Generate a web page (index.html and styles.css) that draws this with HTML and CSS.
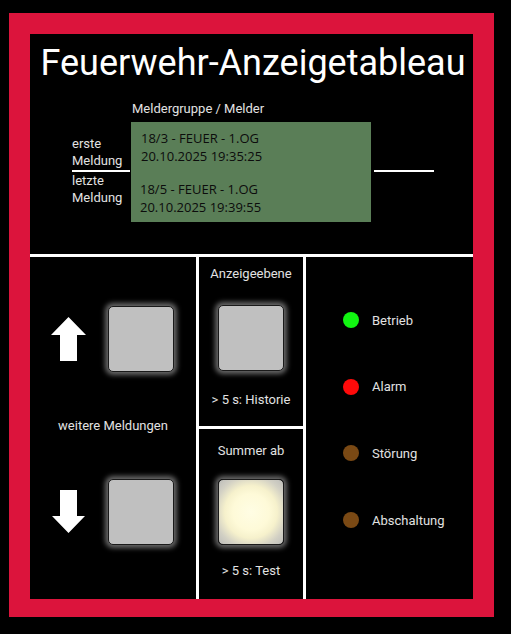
FILE: index.html
```html
<!DOCTYPE html>
<html lang="de">
<head>
<meta charset="utf-8">
<title>Feuerwehr-Anzeigetableau</title>
<link rel="stylesheet" href="styles.css">
</head>
<body>
<div class="frame">
  <div class="inner">
    <section class="top">
      <h1 class="title">Feuerwehr-Anzeigetableau</h1>
      <div class="display-caption">Meldergruppe / Melder</div>
      <div class="display-row">
        <div class="side-labels">
          <div class="label-first">erste<br>Meldung</div>
          <div class="label-last">letzte<br>Meldung</div>
        </div>
        <div class="display">
          <div class="msg">18/3 - FEUER - 1.OG<br>20.10.2025 19:35:25</div>
          <div class="msg msg-last">18/5 - FEUER - 1.OG<br>20.10.2025 19:39:55</div>
        </div>
        <div class="side-right"><div class="side-line"></div></div>
      </div>
    </section>
    <section class="bottom">
      <div class="col col-nav">
        <div class="nav-row">
          <svg class="arrow" width="35" height="44" viewBox="0 0 35 44"><polygon points="17.5,0 35,18 26,18 26,44 9,44 9,18 0,18" fill="#fff"/></svg>
          <div class="btn"></div>
        </div>
        <div class="nav-label">weitere Meldungen</div>
        <div class="nav-row">
          <svg class="arrow" width="35" height="44" viewBox="0 0 35 44"><polygon points="9,0 26,0 26,26 34,26 17.5,43 1,26 9,26" fill="#fff"/></svg>
          <div class="btn"></div>
        </div>
      </div>
      <div class="col col-mid">
        <div class="cell cell-level">
          <div class="cell-label">Anzeigeebene</div>
          <div class="btn"></div>
          <div class="cell-hint">&gt; 5 s: Historie</div>
        </div>
        <div class="cell cell-buzzer">
          <div class="cell-label">Summer ab</div>
          <div class="btn btn-lit"></div>
          <div class="cell-hint">&gt; 5 s: Test</div>
        </div>
      </div>
      <div class="col col-status">
        <div class="status"><span class="led led-green"></span><span>Betrieb</span></div>
        <div class="status"><span class="led led-red"></span><span>Alarm</span></div>
        <div class="status"><span class="led led-brown"></span><span>Störung</span></div>
        <div class="status"><span class="led led-brown"></span><span>Abschaltung</span></div>
      </div>
    </section>
  </div>
</div>
</body>
</html>
```
FILE: styles.css
```css
* { box-sizing: border-box; }
html, body { margin: 0; padding: 0; background: #000; }
body {
  font-family: Roboto, "Liberation Sans", sans-serif;
  color: #e2e2e2;
  width: 511px;
  height: 634px;
  overflow: hidden;
}
.frame {
  margin: 13px 0 0 9px;
  width: 485px;
  height: 604px;
  border: 21px solid #dc143c;
  border-bottom-width: 18px;
  background: #000;
}
.inner {
  height: 100%;
  display: flex;
  flex-direction: column;
}
.top {
  height: 223px;
  border-bottom: 3px solid #fff;
  padding-top: 9px;
}
.title {
  margin: 0;
  font-weight: 400;
  font-size: 36px;
  line-height: 40px;
  color: #fff;
  text-align: center;
  padding-left: 3px;
  white-space: nowrap;
}
.display-caption {
  margin: 18px 0 0 102px;
  font-size: 13px;
  line-height: 16px;
}
.display-row {
  display: flex;
  margin: 5px 0 0 41px;
  height: 100px;
}
.side-labels {
  width: 59px;
  margin-right: 1px;
  display: flex;
  flex-direction: column;
  font-size: 13px;
  line-height: 17px;
  padding-left: 1px;
}
.label-first {
  height: 50px;
  display: flex;
  flex-direction: column;
  justify-content: flex-end;
  padding-bottom: 1px;
  border-bottom: 2px solid #fff;
}
.display {
  width: 240px;
  height: 100px;
  background: #5a7e57;
  color: #0c0c0c;
  font-family: "Open Sans", "Liberation Sans", sans-serif;
  font-size: 13px;
  line-height: 18px;
  padding: 7px 8px 0 10px;
}
.msg-last { margin-top: 15px; margin-left: -1px; }
.side-right {
  width: 60px;
  margin-left: 3px;
  padding-top: 48px;
}
.side-line { height: 2px; background: #fff; }
.bottom {
  flex: 1;
  display: flex;
}
.col { height: 100%; }
.col-nav {
  width: 169px;
  border-right: 3px solid #fff;
  display: flex;
  flex-direction: column;
}
.nav-row {
  display: flex;
  align-items: center;
  padding-left: 21px;
  gap: 22px;
}
.nav-row:first-child { margin-top: 49px; }
.arrow { display: block; flex: none; }
.nav-label {
  font-size: 13px;
  line-height: 16px;
  text-align: center;
  margin: 46px 0 45px;
}
.btn {
  width: 66px;
  height: 66px;
  flex: none;
  background: #c0c0c0;
  border: 1px solid #1a1a1a;
  border-radius: 5px;
  box-shadow: 0 0 5px 3px rgba(150, 150, 150, 0.7);
}
.btn-lit {
  background: radial-gradient(circle, #fffde4 0%, #fefad8 40%, #f6f1cc 58%, #d2d0c4 80%, #bdbdba 100%);
}
.col-mid {
  width: 104px;
  display: flex;
  flex-direction: column;
}
.cell {
  display: flex;
  flex-direction: column;
  align-items: center;
  font-size: 13px;
  line-height: 16px;
}
.cell-level {
  height: 172px;
  border-bottom: 3px solid #fff;
  padding-top: 9px;
}
.cell-level .btn { margin: 23px 0 21px; }
.cell-buzzer { padding-top: 14px; }
.cell-buzzer .btn { margin: 20px 0 18px; }
.col-status {
  width: 170px;
  border-left: 3px solid #fff;
  padding: 55px 0 0 37px;
  display: flex;
  flex-direction: column;
  gap: 50.7px;
}
.status {
  display: flex;
  align-items: center;
  height: 16px;
  gap: 13px;
  font-size: 13px;
}
.led {
  width: 16px;
  height: 16px;
  border-radius: 50%;
  flex: none;
}
.led-green { background: #11f511; }
.led-red { background: #ff0a0a; }
.led-brown { background: #7a4914; }
```
